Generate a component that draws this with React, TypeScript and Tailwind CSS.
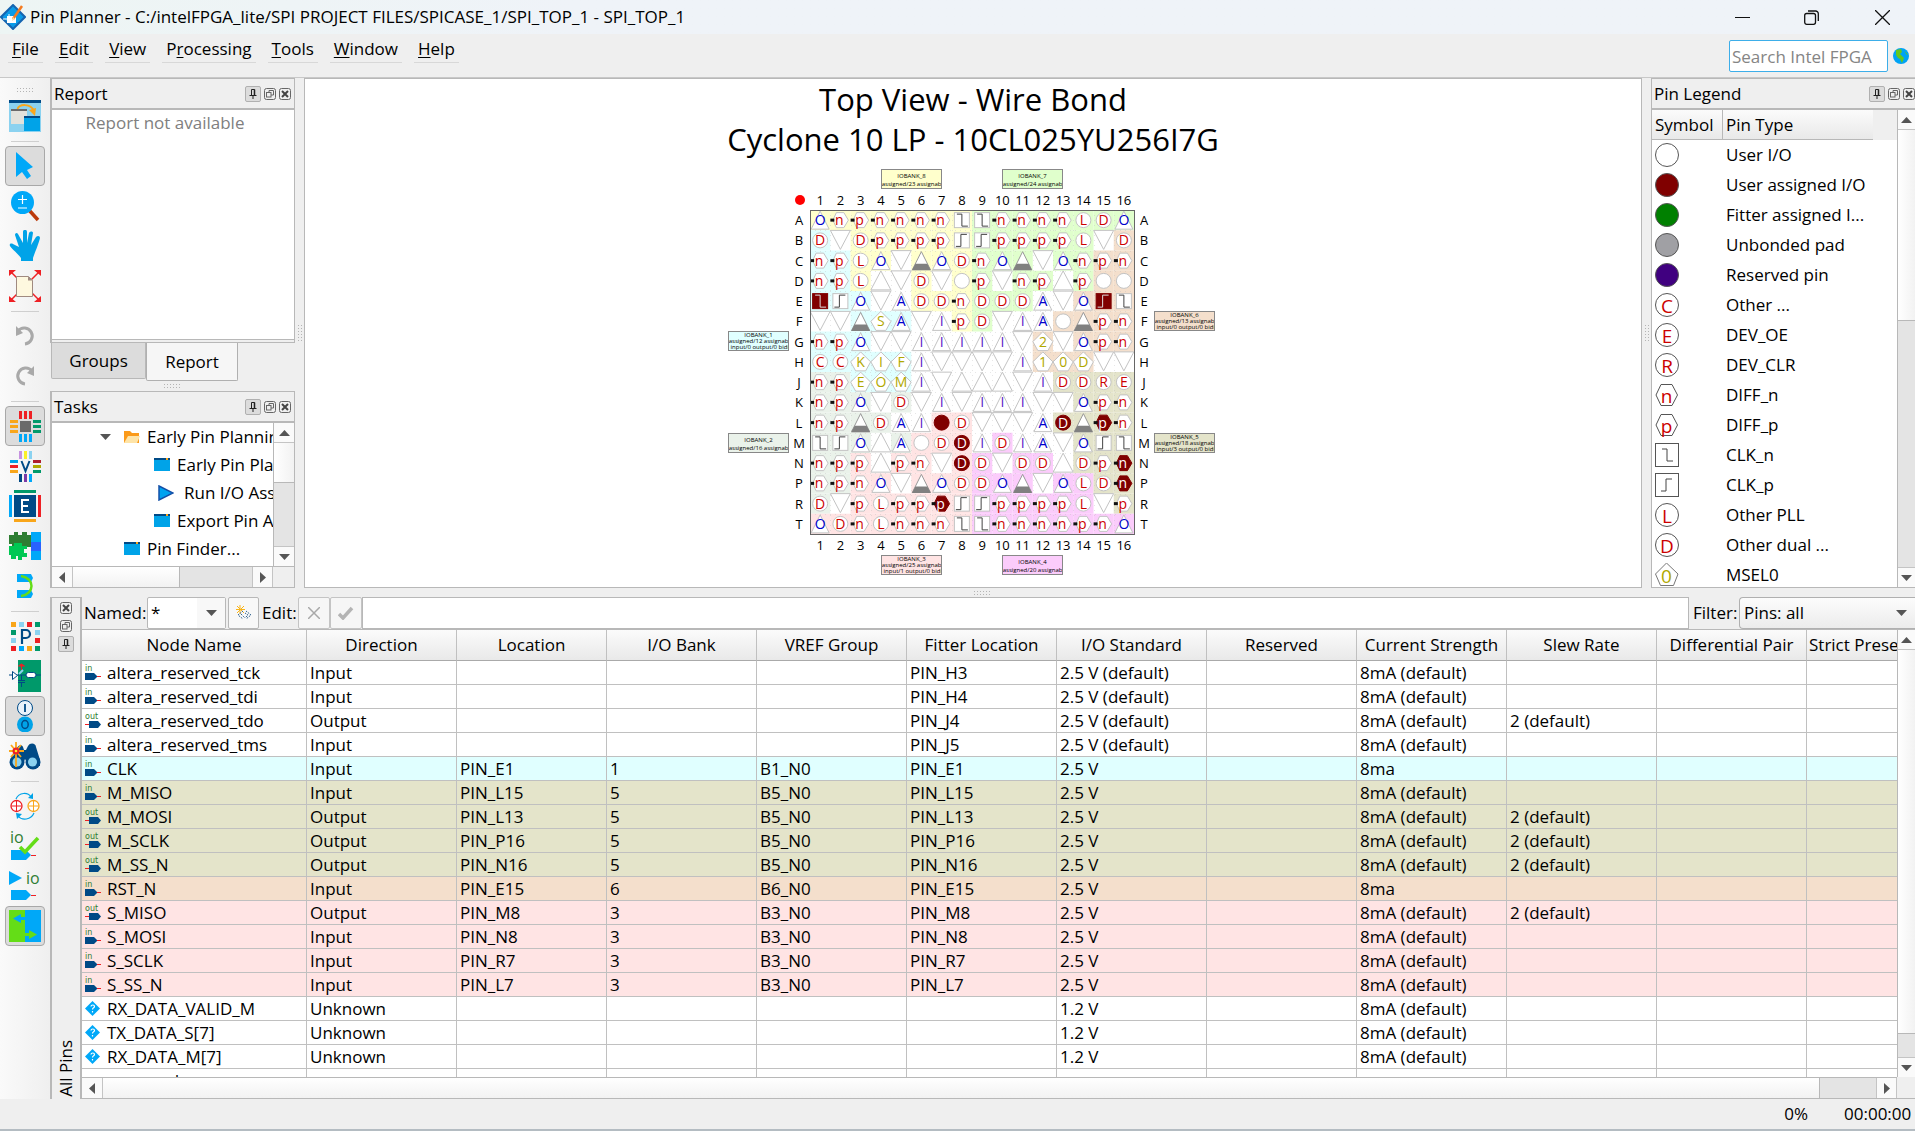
import React from "react";

type Children = { children?: React.ReactNode };

const BANK: Record<string, string> = {
  "1": "#e0ffff",
  "2": "#eaf2ea",
  "3": "#ffe4e4",
  "4": "#fbccfb",
  "5": "#e4e4ca",
  "6": "#f4dfcc",
  "7": "#e0ffcc",
  "8": "#ffffcc",
};

/* ---------- toolbar icons (32x32) ---------- */

function Icon({ children }: Children) {
  return (
    <svg width="32" height="32" viewBox="0 0 32 32" aria-hidden="true">
      {children}
    </svg>
  );
}

const WindowsIcon = (
  <Icon>
    <path d="M0 0h32v32H0z" fill="#8bd2f0" />
    <path d="M0 0h32v3H0z" fill="#004a86" />
    <path d="M2 10h16v14H2z" fill="#e2e2dc" />
    <path d="M2 9h16v2H2z" fill="#6a6a6a" />
    <path d="M15 16h16v15H15z" fill="#00a3e8" />
    <path d="M15 16h16v2H15z" fill="#004a86" />
    <path d="M8.500 9c2-5 13-6 16.500 2" fill="none" stroke="#f9a61a" strokeWidth="2" />
    <path d="M20 10l7-2-1 8z" fill="#f9a61a" />
  </Icon>
);
const PointerIcon = (
  <Icon>
    <path d="M7 2v25l6-5 5 7 4-3-4-6 6-3z" fill="#00a8f8" />
  </Icon>
);
const ZoomIcon = (
  <Icon>
    <path d="M20 20l9 10" stroke="#bb3a0c" strokeWidth="3.500" />
    <circle cx="13.500" cy="12.500" r="11.500" fill="#00a8f8" />
    <path d="M13.500 5v9M9 9.500h9M9 18h9" stroke="#fff" strokeWidth="1.200" />
  </Icon>
);
const HandIcon = (
  <Icon>
    <path
      d="M12 31v-3C9 24 2 18 1 16c-1-2 1-3 3-2l6 3L6 5c0-2 2-3 3-1l5 9V2c0-3 4-3 4 0v11l2-10c1-2 4-2 4 0l-2 12 5-8c2-2 4-1 4 1-1 5-5 14-7 20v3z"
      fill="#00a3e8"
    />
  </Icon>
);
const FitIcon = (
  <Icon>
    <path d="M1 1l30 30M31 1L1 31" stroke="#ee2024" strokeWidth="1.500" />
    <path d="M0 0h7L0 6zM32 0h-7l7 6zM0 32h7l-7-6zM32 32h-7l7-6z" fill="#ee2024" />
    <path d="M7.500 6.500h12l4 4v16h-16z" fill="#fef8df" stroke="#a08a80" />
    <path d="M19 6.500v4h5z" fill="#a08a80" />
  </Icon>
);
const UndoIcon = (
  <Icon>
    <path d="M9 11a8 8 0 1 1 7 13" fill="none" stroke="#a9a9a9" strokeWidth="3" />
    <path d="M7 6l7 7-7 3z" fill="#a9a9a9" />
  </Icon>
);
const RedoIcon = (
  <Icon>
    <path d="M23 11a8 8 0 1 0-7 13" fill="none" stroke="#a9a9a9" strokeWidth="3" />
    <path d="M25 6l-7 7 7 3z" fill="#a9a9a9" />
  </Icon>
);
const ChipIcon = (
  <Icon>
    <path d="M11 11h11v11H11z" fill="#6a6a6a" />
    <path d="M10 1h3v8h-3zM15 1h3v8h-3zM20 1h3v8h-3z" fill="#ee2024" />
    <path d="M10 24h3v8h-3zM15 24h3v8h-3zM20 24h3v8h-3z" fill="#00a8f8" />
    <path d="M1 10h8v3H1zM1 15h8v3H1zM1 20h8v3H1z" fill="#f9a61a" />
    <path d="M24 10h8v3h-8zM24 15h8v3h-8zM24 20h8v3h-8z" fill="#00996a" />
  </Icon>
);
const VrefIcon = (
  <Icon>
    <path d="M10 1h3v8h-3z" fill="#c692e0" />
    <path d="M15 1h3v8h-3z" fill="#fbf026" />
    <path d="M20 1h3v8h-3z" fill="#8bd2f0" />
    <path d="M10 24h3v8h-3z" fill="#004a86" />
    <path d="M15 24h3v8h-3z" fill="#7c3aa6" />
    <path d="M20 24h3v8h-3z" fill="#00a8f8" />
    <path d="M1 10h8v3H1z" fill="#00a3e8" />
    <path d="M1 15h8v3H1z" fill="#ee2024" />
    <path d="M1 20h8v3H1z" fill="#f9a61a" />
    <path d="M24 10h8v3h-8z" fill="#b01e2e" />
    <path d="M24 15h8v3h-8z" fill="#b0a800" />
    <path d="M24 20h8v3h-8z" fill="#00996a" />
    <path d="M12.500 11l4 10 4-10" fill="none" stroke="#004a86" strokeWidth="2" />
  </Icon>
);
const EdgeIcon = (
  <Icon>
    <path d="M5 5h22v22H5z" fill="#004a86" />
    <path d="M5 0h22v3H5z" fill="#00996a" />
    <path d="M5 29h22v3H5z" fill="#f9a61a" />
    <path d="M0 5h3v22H0z" fill="#00a8f8" />
    <path d="M29 5h3v22h-3z" fill="#ee2024" />
    <path d="M20 10h-7v12h7M13 16h6" fill="none" stroke="#fff" strokeWidth="2" />
  </Icon>
);
const PuzzleIcon = (
  <Icon>
    <path d="M0 5h5V2h4v3h4V2h5v3h4v9H0z" fill="#2e7d32" />
    <path d="M3 10h7v9H3zM12 12h10v5H12z" fill="#2e7d32" />
    <path d="M0 16h5v-3h5v3h8v3h-3v4h3v4h-5v3H9v-4H7v3H2v-4H0z" fill="#00c853" />
    <path d="M9 13h4v6H9z" fill="#00c853" />
    <path d="M22 2h10v10H22zM22 21h10v9H22z" fill="#00a8f8" />
    <path d="M22 12h10v9H22z" fill="#2962ff" />
  </Icon>
);
const LinkIcon = (
  <Icon>
    <path d="M8 4h14l2 4-2 4H8zM8 20h14l2 4-2 4H8z" fill="#00a8f8" />
    <path d="M12 6c14 2 14 18 0 20" fill="none" stroke="#64dd17" strokeWidth="2.500" />
  </Icon>
);
const PadIcon = (
  <Icon>
    <path d="M2 2h5v5H2zM18 26h5v5h-5z" fill="#f9a61a" />
    <path d="M10 2h5v5h-5zM2 18h5v5H2z" fill="#8bd2f0" />
    <path d="M18 2h5v5h-5zM2 26h5v5H2zM26 18h5v5h-5z" fill="#ee2024" />
    <path d="M26 2h5v5h-5zM2 10h5v5H2zM26 26h5v5h-5z" fill="#00996a" />
    <path d="M10 26h5v5h-5z" fill="#00a8f8" />
    <path d="M26 10h5v5h-5z" fill="#8bd2f0" />
    <path d="M13 24V10h4a4 4 0 0 1 0 8h-4" fill="none" stroke="#004a86" strokeWidth="2.200" />
  </Icon>
);
const GreenIcon = (
  <Icon>
    <path d="M9 0h23v32H9z" fill="#00996a" />
    <path d="M0 15h4M7 15h10M26 15h6" stroke="#004a86" />
    <path d="M3.500 11.500v8l5-4z" fill="#fff" stroke="#004a86" />
    <rect x="17" y="12.500" width="10" height="5" rx="2.500" fill="#fff" stroke="#004a86" />
    <path d="M9.500 6l3-2 3 2zM12.500 5v5" fill="#ee2024" stroke="#ee2024" />
    <path d="M10 14l4-4" stroke="#8bd2f0" strokeWidth="2" />
    <path d="M12.500 15v5M9 20.500h7M9 22.500h7M12.500 23v4" stroke="#004a86" />
  </Icon>
);
const IoIcon = (
  <Icon>
    <circle cx="16" cy="8" r="7.500" fill="#eaf3fb" stroke="#004a86" />
    <path d="M16 4v8" stroke="#004a86" strokeWidth="1.800" />
    <circle cx="16" cy="24.500" r="8" fill="#00a3e8" />
    <ellipse cx="16" cy="24.500" rx="3.200" ry="4" fill="none" stroke="#004a86" strokeWidth="1.500" />
  </Icon>
);
const BinocularsIcon = (
  <Icon>
    <path d="M3 20L8 8c1-3 5-4 6-1l1 3h2l2-4c2-4 8-3 8 1l4 13v6H20l-4-7-3 7H2z" fill="#004a86" />
    <circle cx="8" cy="22" r="7.500" fill="#004a86" />
    <circle cx="24" cy="22" r="7.500" fill="#004a86" />
    <circle cx="8" cy="22" r="4.500" fill="#8bd2f0" />
    <circle cx="23.500" cy="22" r="4.500" fill="#8bd2f0" />
    <path d="M7 2v25M0 11h15M2 5l10 12M12 5L2 17" stroke="#f9a61a" strokeWidth="1.800" />
    <circle cx="7" cy="11" r="3.500" fill="#ee2024" />
    <circle cx="7" cy="11" r="1.300" fill="#fbf026" />
  </Icon>
);
const SwapIcon = (
  <Icon>
    <circle cx="7.500" cy="16" r="5.500" fill="#fff" stroke="#ee2024" strokeWidth="1.300" />
    <path d="M7.500 11v10M2.500 16h10" stroke="#ee2024" />
    <circle cx="24.500" cy="16" r="5.500" fill="#fff" stroke="#f9a61a" strokeWidth="1.300" />
    <path d="M24.500 11v10M19.500 16h10" stroke="#f9a61a" />
    <path d="M7 9c3-7 12-7 15-2M25 23c-3 7-12 8-16 3" fill="none" stroke="#00a3e8" strokeWidth="1.200" />
    <path d="M24 9l-5-1 5-5zM7 23l6 1-5 5z" fill="#00a3e8" />
  </Icon>
);
const IoCheckIcon = (
  <Icon>
    <text x="1" y="13" fontSize="16" fill="#2e7d32" fontFamily="Open Sans, sans-serif">io</text>
    <path d="M2 20h15l5 5-5 5H2z" fill="#00a8f8" />
    <path d="M22 25.500h5" stroke="#ee2024" />
    <path d="M11 17l5 5L29 8" fill="none" stroke="#64dd17" strokeWidth="3.500" />
  </Icon>
);
const IoPlayIcon = (
  <Icon>
    <path d="M0 1l13 7-13 7z" fill="#00a8f8" />
    <text x="17" y="14" fontSize="16" fill="#2e7d32" fontFamily="Open Sans, sans-serif">io</text>
    <path d="M2 20h15l5 5-5 5H2z" fill="#00a8f8" />
    <path d="M22 25.500h5" stroke="#ee2024" />
  </Icon>
);
const MigrateIcon = (
  <Icon>
    <path d="M0 0h16v32H0z" fill="#64dd17" />
    <path d="M16 0h16v32H16z" fill="#00a8f8" />
    <path d="M4 8.500l8-4.500v3h4v3h-4v3z" fill="#00a8f8" />
    <path d="M28 24.500l-8-4.500v3h-4v3h4v3z" fill="#64dd17" />
  </Icon>
);

type Tool = { label: string; icon: React.ReactNode; on?: boolean } | null;
const TOOLS: Tool[] = [
  { label: "Detach window", icon: WindowsIcon },
  null,
  { label: "Select", icon: PointerIcon, on: true },
  { label: "Zoom", icon: ZoomIcon },
  { label: "Pan", icon: HandIcon },
  { label: "Fit in window", icon: FitIcon },
  null,
  { label: "Undo", icon: UndoIcon },
  { label: "Redo", icon: RedoIcon },
  null,
  { label: "Show I/O banks", icon: ChipIcon, on: true },
  { label: "Show VREF groups", icon: VrefIcon },
  { label: "Show edges", icon: EdgeIcon },
  { label: "Show DQ/DQS pins", icon: PuzzleIcon },
  { label: "Show differential pairs", icon: LinkIcon },
  null,
  { label: "Pad view", icon: PadIcon },
  { label: "Pin properties", icon: GreenIcon },
  { label: "All pins list", icon: IoIcon, on: true },
  { label: "Pin finder", icon: BinocularsIcon },
  null,
  { label: "Pin migration", icon: SwapIcon },
  { label: "Live I/O check", icon: IoCheckIcon },
  { label: "Run I/O analysis", icon: IoPlayIcon },
  { label: "Migration view", icon: MigrateIcon, on: true },
];

/* ---------- small shared parts ---------- */

function Grip({ vertical }: { vertical?: boolean }) {
  return (
    <svg width={vertical ? 4 : 17} height={vertical ? 17 : 4} aria-hidden="true">
      {[0, 3, 6, 9, 12, 15].map((i) => (
        <g key={i} fill="#b4b4b4">
          <rect x={vertical ? 0 : i} y={vertical ? i : 0} width="1" height="1" />
          <rect x={vertical ? 3 : i} y={vertical ? i : 3} width="1" height="1" />
        </g>
      ))}
    </svg>
  );
}

const ARROWS = {
  up: "M0 6h11L5.500 0z",
  down: "M0 0h11L5.500 6z",
  left: "M6 0v11L0 5.500z",
  right: "M0 0v11l6-5.500z",
};
function Arrow({ dir }: { dir: keyof typeof ARROWS }) {
  const flat = dir === "up" || dir === "down";
  return (
    <svg width={flat ? 11 : 6} height={flat ? 6 : 11} aria-hidden="true">
      <path d={ARROWS[dir]} fill="#555" />
    </svg>
  );
}

function VScroll({ thumb }: { thumb: string }) {
  return (
    <div className="flex h-full w-full flex-col border-l border-[#b8b8b8] bg-[#e4e4e4]">
      <button aria-label="Scroll up" className="flex h-5 shrink-0 items-center justify-center border-b border-[#c4c4c4] bg-[#fafafa]">
        <Arrow dir="up" />
      </button>
      <div className={thumb} />
      <div className="flex-1" />
      <button aria-label="Scroll down" className="flex h-5 shrink-0 items-center justify-center border-t border-[#c4c4c4] bg-[#fafafa]">
        <Arrow dir="down" />
      </button>
    </div>
  );
}

function HScroll({ track }: { track: string }) {
  return (
    <div className="flex h-[21px] min-w-0 flex-1 border-t border-[#b8b8b8] bg-[#e4e4e4]">
      <button aria-label="Scroll left" className="flex w-[21px] shrink-0 items-center justify-center border-r border-[#c4c4c4] bg-[#fafafa]">
        <Arrow dir="left" />
      </button>
      <div className="flex-1 border-r border-[#b8b8b8] bg-linear-to-b from-white to-[#f2f2f2]" />
      <div className={track} />
      <button aria-label="Scroll right" className="flex w-[21px] shrink-0 items-center justify-center border-x border-[#c4c4c4] bg-[#fafafa]">
        <Arrow dir="right" />
      </button>
    </div>
  );
}

function PinButton() {
  return (
    <button aria-label="Auto hide" className="flex size-4 items-center justify-center rounded-xs border border-[#b0b0b0] bg-[#dcdcdc]">
      <svg width="8" height="10" viewBox="0 0 8 10" fill="none" stroke="#222" aria-hidden="true">
        <path d="M2.500 6V.5h3V6M.5 6.500h7M4 6v4" />
        <path d="M5.500.5V6" strokeWidth="1.500" />
      </svg>
    </button>
  );
}
function FloatButton() {
  return (
    <button aria-label="Float" className="flex size-3 items-center justify-center">
      <svg width="12" height="12" viewBox="0 0 12 12" fill="none" stroke="#666" aria-hidden="true">
        <rect x=".5" y=".5" width="11" height="11" rx="2" />
        <path d="M5 5V2.500h4.500V7H7" />
        <rect x="2.500" y="4.500" width="4.500" height="4.500" />
      </svg>
    </button>
  );
}
function CloseButton() {
  return (
    <button aria-label="Close panel" className="flex size-3 items-center justify-center">
      <svg width="12" height="12" viewBox="0 0 12 12" fill="none" stroke="#666" aria-hidden="true">
        <rect x=".5" y=".5" width="11" height="11" rx="2" />
        <path d="M3 3l6 6M9 3L3 9" stroke="#444" strokeWidth="2" />
      </svg>
    </button>
  );
}

function DockHeader({ title, tight }: { title: string; tight?: boolean }) {
  return (
    <div className={`flex h-[31px] shrink-0 items-center border-b-2 border-[#b8b8b8] bg-[#efefef] pl-0.5 ${tight ? "pr-0" : "pr-[3px]"}`}>
      <h2 className="flex-1">{title}</h2>
      <div className="flex items-center gap-[3px]">
        <PinButton />
        <FloatButton />
        <CloseButton />
      </div>
    </div>
  );
}

/* ---------- pin symbols ---------- */

const NEG = "M-5-6h5v12h6";
const POS = "M-6 6h5v-12h6";

function Glyph({ x, y, size, fill, children }: { x: number; y: number; size: number; fill: string } & Children) {
  return (
    <text x={x} y={y} fontSize={size} fill={fill} textAnchor="middle">
      {children}
    </text>
  );
}

function PinSymbol({ code }: { code: string }) {
  const line = "#c3c3c3";
  const shape = code[0];
  const text = code.slice(1);
  switch (shape) {
    case "h":
    case "H":
      return (
        <>
          <path d="M-4-7.500h7.500L8 0l-4.500 7.500H-4L-7.500 0z" fill={shape === "H" ? "#800000" : "#fff"} stroke={shape === "H" ? "#800000" : line} />
          <path d="M-10-1.500h4v3h-4z" fill="#111" />
          <Glyph x={-1} y={5} size={14} fill={shape === "H" ? "#fff" : "#cc0000"}>{text}</Glyph>
        </>
      );
    case "c":
    case "F":
      return (
        <>
          <circle r="7.500" fill={shape === "F" ? "#800000" : "#fff"} stroke={shape === "F" ? "#800000" : line} />
          {text && <Glyph x={0} y={5} size={14} fill={shape === "F" ? "#fff" : "#cc0000"}>{text}</Glyph>}
        </>
      );
    case "y":
      return (
        <>
          <path d="M0-10L10 0 5 9H-5L-10 0z" fill="#fff" stroke={line} />
          <Glyph x={0} y={5} size={14} fill="#b0a800">{text}</Glyph>
        </>
      );
    case "v":
      return <path d="M-10-10h20L0 9z" fill="#fff" stroke={line} />;
    case "^":
      return <path d="M-10 9h20L0-10z" fill="#fff" stroke={line} />;
    case "G":
      return (
        <>
          <path d="M-9 9H9L0-9z" fill="#fff" stroke="#999" />
          <path d="M-9.500 9.500h19L6 3H-6z" fill="#808080" />
        </>
      );
    case "t":
      return (
        <>
          <path d="M-9 9H9L0-9z" fill="#fff" stroke={line} />
          <Glyph x={0} y={5} size={14} fill={text === "I" ? "#5a18c8" : "#0000cc"}>{text}</Glyph>
        </>
      );
    default: {
      const filled = shape === "Z" || shape === "S";
      return (
        <>
          <rect x="-7.500" y="-7.500" width="15" height="15" fill={filled ? "#800000" : "#fff"} stroke={filled ? "#800000" : line} />
          <path d={shape.toLowerCase() === "z" ? NEG : POS} fill="none" stroke={filled ? "#ddd" : "#444"} />
        </>
      );
    }
  }
}

/* Each entry is the symbol code, then ":" and the bank that shades its cell. */
const GRID: [string, string][] = [
  ["A", "tO:8 hn:8 hp:8 hn:8 hn:8 hn:8 hn:8 z:8 z:7 hn:7 hn:7 hn:7 hn:7 cL:7 cD:7 tO:7"],
  ["B", "cD:1 v cD:8 hp:8 hp:8 hp:8 hp:8 s:8 s:7 hp:7 hp:7 hp:7 hp:7 cL:7 v cD:6"],
  ["C", "hn:1 hp:1 cL:8 tO:8 v G:8 tO:8 cD:8 hn:7 tO:7 G:7 v tO:7 hn:7 hp:6 hn:6"],
  ["D", "hn:1 hp:1 cL:8 ^ v cD:8 v c:8 hp:7 v hn:7 hp:7 ^ hp:7 c:6 c:6"],
  ["E", "Z:1 s:1 tO:1 v tA cD:8 cD:8 hn:8 cD:7 cD:7 cD:7 tA v tO:6 S:6 z:6"],
  ["F", "v v G:1 yS:1 tA:1 v tI hp:8 cD:7 v tI tA c:6 G:6 hp:6 hn:6"],
  ["G", "hn:1 hp:1 tO:1 v v tI tI tI tI tI v y2:6 v tO:6 hp:6 hn:6"],
  ["H", "cC:1 cC:1 yK:1 yI:1 yF:1 tI v v v v tI y1:6 y0:6 yD:6 v v"],
  ["J", "hn:2 hp:2 yE:1 yO:1 yM:1 tI v ^ ^ ^ v tI cD:5 cD:5 cR:5 cE:5"],
  ["K", "hn:2 hp:2 tO:2 v cD:2 v tI v tI tI tI v v tO:5 hp:5 hn:5"],
  ["L", "hn:2 hp:2 G:2 cD:2 tA tI F:3 cD:3 v v v tA FD:5 G:5 Hp:5 hn:5"],
  ["M", "z:2 s:2 tO:2 ^ tA:2 c:3 cD:3 FD:3 tI cD:4 tI tA v tO:5 s:5 z:5"],
  ["N", "hn:2 hp:2 hp:3 ^ hp:3 hn:3 v FD:3 cD:4 v cD:4 cD:4 ^ cD:5 hp:5 Hn:5"],
  ["P", "hn:2 hp:2 hn:3 tO:3 v G:3 tO:3 cD:3 cD:4 tO:4 G:4 v tO:4 cL:4 cD:5 Hn:5"],
  ["R", "cD:2 v hp:3 cL:3 hp:3 hp:3 Hp:3 s:3 s:4 hp:4 hp:4 hp:4 hp:4 cL:4 v hp:5"],
  ["T", "tO:3 cD:3 hn:3 cL:3 hn:3 hn:3 hn:3 z:3 z:4 hn:4 hn:4 hn:4 hn:4 hp:4 hn:4 tO:4"],
];

const BANK_TAGS = [
  { n: "8", x: 159, y: 9, lines: ["0 assigned/23 assignable"] },
  { n: "7", x: 280, y: 9, lines: ["0 assigned/24 assignable"] },
  { n: "6", x: 432, y: 151, lines: ["1 assigned/13 assignable", "1 input/0 output/0 bidir"] },
  { n: "5", x: 432, y: 273, lines: ["4 assigned/18 assignable", "1 input/3 output/0 bidir"] },
  { n: "4", x: 280, y: 395, lines: ["0 assigned/20 assignable"] },
  { n: "3", x: 159, y: 395, lines: ["4 assigned/25 assignable", "3 input/1 output/0 bidir"] },
  { n: "2", x: 6, y: 273, lines: ["0 assigned/16 assignable"] },
  { n: "1", x: 6, y: 171, lines: ["1 assigned/12 assignable", "1 input/0 output/0 bidir"] },
];

const CELL = 20.25;
const LEFT = 88;
const TOP = 50;

function ChipView() {
  const mid = (i: number) => i * CELL + CELL / 2;
  return (
    <svg width="500" height="420" viewBox="1 -1 500 420" fontFamily="Open Sans, sans-serif" role="img" aria-label="Package top view">
      {BANK_TAGS.map((b) => (
        <g key={b.n} fontSize="6" textAnchor="middle">
          <svg x={b.x} y={b.y} width="61" height="20">
            <rect width="61" height="20" fill={BANK[b.n]} />
            <text x="30.500" y={b.lines.length > 1 ? 6 : 9}>{`IOBANK_${b.n}`}</text>
            {b.lines.map((l, i) => (
              <text key={l} x="30.500" y={b.lines.length > 1 ? 12 + i * 6 : 17}>{l}</text>
            ))}
          </svg>
          <rect x={b.x + 0.5} y={b.y + 0.5} width="60" height="19" fill="none" stroke="#888" />
        </g>
      ))}
      <circle cx="78" cy="40" r="5" fill="#f00" />
      {GRID.map(([row, cells], r) => (
        <g key={row}>
          {cells.split(" ").map((cell, c) => {
            const bank = cell.split(":")[1];
            return bank ? (
              <rect key={c} x={LEFT + c * CELL} y={TOP + r * CELL} width={CELL} height={CELL} fill={BANK[bank]} />
            ) : null;
          })}
        </g>
      ))}
      {GRID.map(([row], i) => (
        <g key={row} stroke="#bbb" strokeOpacity=".35" strokeDasharray="1 4">
          <path d={`M${LEFT} ${Math.round(TOP + i * CELL) + 0.5}h324M${Math.round(LEFT + i * CELL) + 0.5} ${TOP}v324`} />
        </g>
      ))}
      {GRID.map(([row, cells], r) => (
        <g key={row}>
          {cells.split(" ").map((cell, c) => (
            <g key={c} transform={`translate(${LEFT + mid(c)} ${TOP + mid(r)})`}>
              <PinSymbol code={cell.split(":")[0]} />
            </g>
          ))}
        </g>
      ))}
      <rect x={LEFT + 0.5} y={TOP + 0.5} width="324" height="324" fill="none" stroke="#666" />
      {GRID.map(([row], i) => (
        <g key={row} fontSize="13" textAnchor="middle">
          <text x={LEFT + mid(i)} y="45">{i + 1}</text>
          <text x={LEFT + mid(i)} y="390">{i + 1}</text>
          <text x="77" y={TOP + mid(i) + 5}>{row}</text>
          <text x="422" y={TOP + mid(i) + 5}>{row}</text>
        </g>
      ))}
    </svg>
  );
}

/* ---------- legend ---------- */

const LEGEND: [string, string][] = [
  ["#ffffff", "User I/O"],
  ["#800000", "User assigned I/O"],
  ["#008000", "Fitter assigned I..."],
  ["#a0a0a4", "Unbonded pad"],
  ["#400080", "Reserved pin"],
  ["C", "Other ..."],
  ["E", "DEV_OE"],
  ["R", "DEV_CLR"],
  ["n", "DIFF_n"],
  ["p", "DIFF_p"],
  ["neg", "CLK_n"],
  ["pos", "CLK_p"],
  ["L", "Other PLL"],
  ["D", "Other dual ..."],
  ["0", "MSEL0"],
];

function LegendSymbol({ kind }: { kind: string }) {
  let body: React.ReactNode;
  if (kind[0] === "#") body = <circle r="11.500" fill={kind} stroke="#555" />;
  else if (kind === "neg" || kind === "pos")
    body = (
      <>
        <rect x="-11.500" y="-11.500" width="23" height="23" fill="#fff" stroke="#555" />
        <path d={kind === "neg" ? NEG : POS} fill="none" stroke="#444" />
      </>
    );
  else if (kind === "n" || kind === "p")
    body = (
      <>
        <path d="M-6-10.500H5L10.500 0 5 10.500H-6L-11 0z" fill="#fff" stroke="#555" />
        <Glyph x={-0.5} y={8} size={19} fill="#cc0000">{kind}</Glyph>
      </>
    );
  else if (kind === "0")
    body = (
      <>
        <path d="M-.5-12L11-1 6.500 10.500h-13L-11.500-1z" fill="#fff" stroke="#777" />
        <Glyph x={-0.5} y={8} size={19} fill="#b0a800">0</Glyph>
      </>
    );
  else
    body = (
      <>
        <circle r="11.500" fill="#fff" stroke="#555" />
        <Glyph x={0} y={8} size={19} fill="#cc0000">{kind}</Glyph>
      </>
    );
  return (
    <svg width="24" height="24" viewBox="-12 -12 24 24" fontFamily="Open Sans, sans-serif" aria-hidden="true">
      {body}
    </svg>
  );
}

/* ---------- pin table ---------- */

const COLUMNS = ["Node Name", "Direction", "Location", "I/O Bank", "VREF Group", "Fitter Location", "I/O Standard", "Reserved", "Current Strength", "Slew Rate", "Differential Pair", "Strict Preservation"];

type Row = [name: string, dir: string, loc: string, bank: string, fitter: string, std: string, cur: string, slew: string];
const D25 = "2.5 V (default)";
const MA = "8mA (default)";
const ROWS: Row[] = [
  ["altera_reserved_tck", "Input", "", "", "PIN_H3", D25, MA, ""],
  ["altera_reserved_tdi", "Input", "", "", "PIN_H4", D25, MA, ""],
  ["altera_reserved_tdo", "Output", "", "", "PIN_J4", D25, MA, "2 (default)"],
  ["altera_reserved_tms", "Input", "", "", "PIN_J5", D25, MA, ""],
  ["CLK", "Input", "PIN_E1", "1", "PIN_E1", "2.5 V", "8ma", ""],
  ["M_MISO", "Input", "PIN_L15", "5", "PIN_L15", "2.5 V", MA, ""],
  ["M_MOSI", "Output", "PIN_L13", "5", "PIN_L13", "2.5 V", MA, "2 (default)"],
  ["M_SCLK", "Output", "PIN_P16", "5", "PIN_P16", "2.5 V", MA, "2 (default)"],
  ["M_SS_N", "Output", "PIN_N16", "5", "PIN_N16", "2.5 V", MA, "2 (default)"],
  ["RST_N", "Input", "PIN_E15", "6", "PIN_E15", "2.5 V", "8ma", ""],
  ["S_MISO", "Output", "PIN_M8", "3", "PIN_M8", "2.5 V", MA, "2 (default)"],
  ["S_MOSI", "Input", "PIN_N8", "3", "PIN_N8", "2.5 V", MA, ""],
  ["S_SCLK", "Input", "PIN_R7", "3", "PIN_R7", "2.5 V", MA, ""],
  ["S_SS_N", "Input", "PIN_L7", "3", "PIN_L7", "2.5 V", MA, ""],
  ["RX_DATA_VALID_M", "Unknown", "", "", "", "1.2 V", MA, ""],
  ["TX_DATA_S[7]", "Unknown", "", "", "", "1.2 V", MA, ""],
  ["RX_DATA_M[7]", "Unknown", "", "", "", "1.2 V", MA, ""],
];
const ROW_BG: Record<string, string> = {
  "": "bg-white",
  "1": "bg-[#e0ffff]",
  "3": "bg-[#ffe4e4]",
  "5": "bg-[#e4e4ca]",
  "6": "bg-[#f4dfcc]",
};

function DirIcon({ dir }: { dir: string }) {
  return (
    <svg width="16" height="17" viewBox="0 -1 16 17" fontSize="8" fontFamily="DejaVu Sans, sans-serif" className="shrink-0" aria-hidden="true">
      {dir === "Unknown" ? (
        <>
          <path d="M7.500 0L15 7.500 7.500 15 0 7.500z" fill="#00a8f8" />
          <path d="M6 5.500c0-2 3.500-2 3.500 0 0 1.500-2 1-2 3M7.500 10v1.500" fill="none" stroke="#fff" strokeWidth="1.200" />
        </>
      ) : dir === "Input" ? (
        <>
          <text x="0" y="6" fill="#2e7d32">in</text>
          <path d="M0 8h9l3.500 3.500L9 15H0z" fill="#004a86" />
          <path d="M12 11.500h4" stroke="#ee2024" />
        </>
      ) : (
        <>
          <text x="0" y="6" fill="#2e7d32">out</text>
          <path d="M4 8h9l3 3.500-3 3.500H4z" fill="#004a86" />
          <path d="M0 11.500h4" stroke="#ee2024" />
        </>
      )}
    </svg>
  );
}

function PinTable() {
  const cell = "h-6 overflow-hidden border-r border-b border-[#c0c0c0] px-[3px] py-0 leading-[22px] whitespace-nowrap";
  return (
    <table className="w-[1875px] table-fixed border-separate border-spacing-0">
      <colgroup>
        <col className="w-[225px]" />
        {COLUMNS.slice(1).map((c) => (
          <col key={c} className="w-[150px]" />
        ))}
      </colgroup>
      <thead>
        <tr>
          {COLUMNS.map((c, i) => (
            <th
              key={c}
              scope="col"
              className={`h-[31px] border-r border-b border-[#c0c0c0] border-b-[#aaa] bg-linear-to-b from-[#fbfbfb] to-[#e9e9e9] px-0.5 py-0 font-normal whitespace-nowrap ${i === 11 ? "text-left" : "text-center"}`}
            >
              {c}
            </th>
          ))}
        </tr>
      </thead>
      <tbody>
        {ROWS.map(([name, dir, loc, bank, fitter, std, cur, slew]) => (
          <tr key={name} className={ROW_BG[bank]}>
            <td className={cell}>
              <div className="flex items-center gap-1.5">
                <DirIcon dir={dir} />
                {name}
              </div>
            </td>
            {[dir, loc, bank, bank && `B${bank}_N0`, fitter, std, "", cur, slew, "", ""].map((v, i) => (
              <td key={i} className={cell}>{v}</td>
            ))}
          </tr>
        ))}
        <tr className="bg-white">
          <td className={cell}><div className="pl-1.5">&lt;&lt;new node&gt;&gt;</div></td>
          {COLUMNS.slice(1).map((c) => (
            <td key={c} className={cell} />
          ))}
        </tr>
      </tbody>
    </table>
  );
}

/* ---------- task tree ---------- */

function TaskIcon() {
  return (
    <svg width="16" height="14" aria-hidden="true" className="shrink-0">
      <path d="M0 0h16v13H0z" fill="#00a3e8" />
      <path d="M0 0h16v2H0z" fill="#004a86" />
      <path d="M12 0h2v2h-2z" fill="#f9a61a" />
    </svg>
  );
}

const MENU: [string, string, string][] = [
  ["", "F", "ile"],
  ["", "E", "dit"],
  ["", "V", "iew"],
  ["P", "r", "ocessing"],
  ["", "T", "ools"],
  ["", "W", "indow"],
  ["", "H", "elp"],
];

export default function App() {
  return (
    <div className="flex h-screen flex-col overflow-hidden bg-[#efefef] font-['Open_Sans',sans-serif] text-[17px] leading-6 text-black">
      <header className="flex h-[34px] shrink-0 items-center bg-linear-to-r from-[#edf5f4] to-[#eff3f8] to-30%">
        <svg width="26" height="26" viewBox="0 0 26 26" aria-hidden="true">
          <path d="M13 1l12 12-12 12L1 13z" fill="#0a9be8" stroke="#1565b0" strokeWidth="2" />
          <path d="M7 12h9v7H7z" fill="#fff" />
          <path d="M3 15h4M9 12v-2" stroke="#fff" />
          <path d="M13 15L22 2" stroke="#f47a20" strokeWidth="2.500" />
          <path d="M12 17l1-4 2 2z" fill="#ffd9a0" />
        </svg>
        <h1 className="ml-1 flex-1 text-[17px]">Pin Planner - C:/intelFPGA_lite/SPI PROJECT FILES/SPICASE_1/SPI_TOP_1 - SPI_TOP_1</h1>
        <button aria-label="Minimize" className="flex h-full w-[69px] items-center justify-center">
          <svg width="15" height="15" aria-hidden="true"><path d="M0 7.500h15" stroke="#111" /></svg>
        </button>
        <button aria-label="Restore" className="flex h-full w-[69px] items-center justify-center">
          <svg width="15" height="15" viewBox="0 0 15 15" fill="none" stroke="#111" strokeWidth="1.300" aria-hidden="true">
            <rect x=".7" y="3.500" width="10.800" height="10.800" rx="2" />
            <path d="M4 1h7.500A2.700 2.700 0 0 1 14.300 3.700V11" />
          </svg>
        </button>
        <button aria-label="Close" className="flex h-full w-[69px] items-center justify-center pl-1">
          <svg width="15" height="15" stroke="#111" strokeWidth="1.300" aria-hidden="true"><path d="M0 0l15 15M15 0L0 15" /></svg>
        </button>
      </header>

      <div className="flex h-11 shrink-0 items-start justify-between border-b border-[#c8c8c8] pl-2">
        <nav className="flex gap-3">
          {MENU.map(([pre, key, rest]) => (
            <button key={rest} className="h-[29px] border-b border-[#d8d8d8] px-1 pt-0.5">
              {pre}
              <span className="underline underline-offset-2">{key}</span>
              {rest}
            </button>
          ))}
        </nav>
        <div className="flex items-center gap-[5px] pt-1.5 pr-1.5">
          <input
            aria-label="Search Intel FPGA"
            placeholder="Search Intel FPGA"
            className="h-8 w-[159px] rounded-xs border border-[#3daee9] bg-white px-0.5 placeholder:text-[#858585]"
          />
          <svg width="16" height="16" viewBox="0 0 16 16" aria-hidden="true">
            <circle cx="8" cy="8" r="8" fill="#00a3f5" />
            <path d="M3 2l5-1 1 3-2 2 2 2 2 2-2 5-2-4-2-1-2-3zM12 3l3 4-2-1z" fill="#64c81e" />
          </svg>
        </div>
      </div>

      <div className="flex min-h-0 flex-1">
        <aside className="flex w-[50px] shrink-0 flex-col items-center bg-linear-to-r from-[#fafafa] to-[#efefef]">
          <div className="flex h-[18px] items-center pt-1.5"><Grip /></div>
          {TOOLS.map((t, i) =>
            t ? (
              <button
                key={t.label}
                aria-label={t.label}
                className={`flex size-10 items-center justify-center rounded-sm border ${t.on ? "border-[#a8a8a8] bg-[#dcdcdc]" : "border-transparent"}`}
              >
                {t.icon}
              </button>
            ) : (
              <div key={i} className="flex h-2.5 w-7 items-center"><div className="h-px w-full bg-[#cfcfcf]" /></div>
            ),
          )}
        </aside>

        <main className="flex min-w-0 flex-1 flex-col">
          <div className="flex h-[510px] shrink-0">
            <div className="flex w-[245px] shrink-0 flex-col">
              <section className="flex h-[264px] flex-col border-2 border-r border-b-0 border-t border-[#b8b8b8]">
                <DockHeader title="Report" />
                <p className="flex-1 border-b border-[#b8b8b8] bg-white text-center leading-[26px] text-[#808080]">
                  <span className="pr-4">Report not available</span>
                </p>
                <div className="h-0.5 bg-[#efefef]" />
              </section>
              <div className="flex h-[39px] items-start border-t border-[#b8b8b8] pl-px" role="tablist">
                <button role="tab" aria-selected="false" className="h-9 w-[95px] rounded-b-xs border border-t-0 border-[#b8b8b8] bg-[#dcdcdc]">Groups</button>
                <button role="tab" aria-selected="true" className="h-[38px] w-[92px] rounded-b-xs border border-t-0 border-[#b0b0b0] bg-[#f6f6f6]">Report</button>
              </div>
              <div className="flex h-2.5 items-center justify-center"><Grip /></div>
              <section className="flex min-h-0 flex-1 flex-col border border-l-2 border-[#b8b8b8]">
                <DockHeader title="Tasks" />
                <div className="flex min-h-0 flex-1">
                  <ul className="min-w-0 flex-1 overflow-hidden bg-white whitespace-nowrap leading-7">
                    <li className="flex h-7 items-center pl-12">
                      <span className="flex w-6 shrink-0"><Arrow dir="down" /></span>
                      <svg width="16" height="13" aria-hidden="true" className="mr-[7px] shrink-0">
                        <path d="M0 0h6l2 2h7v10H0z" fill="#fb9a1a" />
                        <path d="M4 5h12l-3 7H0z" fill="#fee4a8" />
                      </svg>
                      Early Pin Planning
                    </li>
                    <li className="flex h-7 items-center gap-[7px] pl-[102px]"><TaskIcon />Early Pin Planning...</li>
                    <li className="flex h-7 items-center gap-[10px] pl-[106px]">
                      <svg width="16" height="16" aria-hidden="true" className="shrink-0"><path d="M1 1l14 7-14 7z" fill="#00a3f0" stroke="#1450a8" strokeWidth="1.500" /></svg>
                      Run I/O Assignment Analysis
                    </li>
                    <li className="flex h-7 items-center gap-[7px] pl-[102px]"><TaskIcon />Export Pin Assignments...</li>
                    <li className="flex h-7 items-center gap-[7px] pl-[72px]"><TaskIcon />Pin Finder...</li>
                  </ul>
                  <div className="w-[21px]"><VScroll thumb="h-10 border-b border-[#b8b8b8] bg-linear-to-r from-white to-[#f2f2f2]" /></div>
                </div>
                <div className="flex shrink-0">
                  <HScroll track="w-[72px]" />
                  <div className="w-[21px] border-t border-[#b8b8b8]" />
                </div>
              </section>
            </div>

            <div className="flex w-[9px] shrink-0 items-center justify-center"><Grip vertical /></div>

            <section className="flex min-w-0 flex-1 flex-col items-center overflow-hidden border border-[#b8b8b8] bg-white text-center text-[31px] leading-10">
              <h2>Top View - Wire Bond</h2>
              <h3>Cyclone 10 LP - 10CL025YU256I7G</h3>
              <ChipView />
            </section>

            <div className="flex w-[9px] shrink-0 items-center justify-center"><Grip vertical /></div>

            <section className="flex w-[264px] shrink-0 flex-col border border-r-0 border-[#b8b8b8]">
              <DockHeader title="Pin Legend" tight />
              <div className="flex min-h-0 flex-1">
                <div className="min-w-0 flex-1 overflow-hidden bg-white">
                  <table className="w-full table-fixed border-separate border-spacing-0 text-left">
                    <colgroup>
                      <col className="w-[71px]" />
                      <col />
                      <col className="w-6" />
                    </colgroup>
                    <thead>
                      <tr className="h-[30px]">
                        <th scope="col" className="border-r border-b border-[#b8b8b8] bg-linear-to-b from-[#fbfbfb] to-[#e9e9e9] p-0 pl-[3px] font-normal">Symbol</th>
                        <th scope="col" className="border-b border-[#b8b8b8] bg-linear-to-b from-[#fbfbfb] to-[#e9e9e9] p-0 pl-[3px] font-normal">Pin Type</th>
                        <td className="bg-[#efefef] p-0" />
                      </tr>
                    </thead>
                    <tbody>
                      {LEGEND.map(([kind, label]) => (
                        <tr key={label} className="h-[30px]">
                          <td className="p-0 pl-[3px]"><LegendSymbol kind={kind} /></td>
                          <td className="p-0 pl-[3px] whitespace-nowrap" colSpan={2}>{label}</td>
                        </tr>
                      ))}
                    </tbody>
                  </table>
                </div>
                <div className="w-[18px]"><VScroll thumb="h-[191px] border-b border-[#b8b8b8] bg-linear-to-r from-white to-[#f2f2f2]" /></div>
              </div>
            </section>
          </div>

          <div className="flex h-[9px] shrink-0 items-center justify-center"><Grip /></div>

          <section className="flex min-h-0 flex-1">
            <div className="flex w-8 shrink-0 flex-col items-center border-t border-r-2 border-l-2 border-[#b8b8b8]">
              <div className="flex flex-col items-center gap-1 pt-1">
                <CloseButton />
                <div className="pt-0.5"><FloatButton /></div>
                <PinButton />
              </div>
              <div className="flex-1" />
              <h2 className="rotate-180 pt-0.5 [writing-mode:vertical-rl]">All Pins</h2>
            </div>
            <div className="flex min-w-0 flex-1 flex-col">
              <div className="flex h-[33px] shrink-0 items-stretch border-b border-[#b8b8b8]">
                <label htmlFor="named" className="w-[65px] self-center pl-0.5">Named:</label>
                <div className="flex w-[79px] rounded-xs border border-[#b8b8b8] bg-white">
                  <input id="named" defaultValue="*" className="w-[49px] px-[3px]" />
                  <button aria-label="Named filters" className="flex flex-1 items-center justify-center bg-[#f8f8f8]"><Arrow dir="down" /></button>
                </div>
                <button aria-label="Edit filter" className="ml-0.5 flex w-[31px] items-center justify-center rounded-xs border border-[#b8b8b8] bg-[#f8f8f8]">
                  <svg width="16" height="16" viewBox="0 0 16 16" aria-hidden="true">
                    <path d="M4 0v9M0 4.500h9M1 1l7 7M8 1L1 8" stroke="#f9b41a" />
                    <path d="M7 6l-5 4 5 4M5 9l4 4M10 6l5 4-5 4M9 8l3 2-3 3" fill="none" stroke="#31638f" strokeDasharray="1.500 1" />
                  </svg>
                </button>
                <label htmlFor="edit" className="w-[39px] self-center pl-[3px]">Edit:</label>
                <button aria-label="Cancel edit" className="flex w-8 items-center justify-center rounded-xs border border-[#c4c4c4] bg-[#f6f6f6]">
                  <svg width="12" height="12" stroke="#a8a8a8" strokeWidth="1.500" aria-hidden="true"><path d="M0 0l12 12M12 0L0 12" /></svg>
                </button>
                <button aria-label="Accept edit" className="flex w-8 items-center justify-center rounded-xs border border-[#c4c4c4] bg-[#f6f6f6]">
                  <svg width="16" height="14" fill="none" stroke="#b4b4b4" strokeWidth="3.500" aria-hidden="true"><path d="M1 8l4 4L14 2" /></svg>
                </button>
                <input id="edit" className="min-w-0 flex-1 border border-[#b8b8b8] bg-white" />
                <label htmlFor="filter" className="w-[50px] self-center pl-1">Filter:</label>
                <div className="relative flex w-[176px]">
                  <select id="filter" className="w-full appearance-none rounded-l-sm border border-r-0 border-[#b0b0b0] bg-linear-to-b from-[#fcfcfc] to-[#ececec] pl-1">
                    <option>Pins: all</option>
                  </select>
                  <span className="pointer-events-none absolute inset-y-0 right-2 flex items-center"><Arrow dir="down" /></span>
                </div>
              </div>
              <div className="flex min-h-0 flex-1">
                <div className="min-w-0 flex-1 overflow-hidden bg-white"><PinTable /></div>
                <div className="w-[18px] shrink-0"><VScroll thumb="h-[384px] border-b border-[#b8b8b8] bg-linear-to-r from-white to-[#f2f2f2]" /></div>
              </div>
              <div className="flex shrink-0 border-b border-[#b8b8b8]">
                <HScroll track="w-14" />
                <div className="w-[18px]" />
              </div>
            </div>
          </section>
        </main>
      </div>

      <footer className="flex h-8 shrink-0 items-center justify-end gap-9 overflow-hidden border-b-2 border-[#b4bcc2] whitespace-nowrap">
        <span>0%</span>
        <span className="w-[71px]">00:00:00</span>
      </footer>
    </div>
  );
}
